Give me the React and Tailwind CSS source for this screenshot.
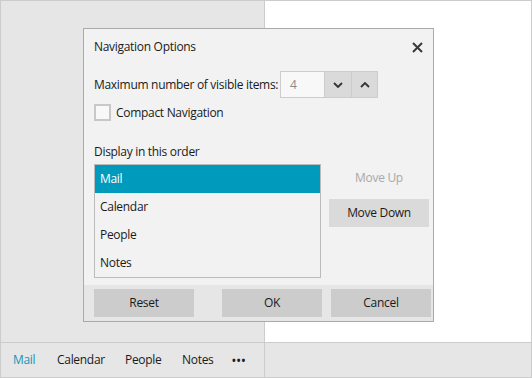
import React from "react";

const font = { fontFamily: '"Open Sans", "Noto Sans", sans-serif' };

function Spinner() {
  return (
    <div className="flex h-[27px]">
      <div className="flex w-[45px] items-center border border-[#cccccc] bg-[#f8f8f8] pl-[9px] text-[#8a8a8a]">4</div>
      <button type="button" className="flex w-[26px] items-center justify-center border-y border-[#cccccc] bg-[#dadada]">
        <svg width="10" height="6" viewBox="0 0 10 6" fill="none" stroke="#333" strokeWidth="1.8">
          <path d="M1 1l4 4 4-4" />
        </svg>
      </button>
      <button type="button" className="flex w-[27px] items-center justify-center border border-[#cccccc] bg-[#dadada]">
        <svg width="10" height="6" viewBox="0 0 10 6" fill="none" stroke="#333" strokeWidth="1.8">
          <path d="M1 5l4-4 4 4" />
        </svg>
      </button>
    </div>
  );
}

function Dialog() {
  const items = ["Mail", "Calendar", "People", "Notes"];
  return (
    <div className="absolute left-[82px] top-[27px] flex h-[294px] w-[351px] flex-col border border-[#aaaaaa] bg-[#f2f2f2] text-[12px] tracking-[-0.3px] text-[#1a1a1a]">
      <div className="flex h-[36px] items-center justify-between pl-[10px] pr-[10px]">
        <span>Navigation Options</span>
        <svg width="11" height="11" viewBox="0 0 11 11" stroke="#3a3a3a" strokeWidth="2">
          <path d="M1 1l9 9M10 1l-9 9" />
        </svg>
      </div>
      <div className="mt-[6px] flex items-center pl-[10px]">
        <span className="w-[186px]">Maximum number of visible items:</span>
        <Spinner />
      </div>
      <div className="mt-[6px] flex h-[17px] items-center pl-[10px]">
        <span className="h-[17px] w-[17px] border-2 border-[#c8c8c8] bg-[#f8f8f8]" />
        <span className="ml-[5px]">Compact Navigation</span>
      </div>
      <div className="mt-[23px] h-[16px] pl-[10px] leading-[16px]">Display in this order</div>
      <div className="mt-[4px] flex pl-[10px]">
        <div className="h-[114px] w-[227px] border border-[#bbbbbb] bg-[#f2f2f2]">
          {items.map((it, i) => (
            <div
              key={it}
              className={`flex h-[28px] items-center pl-[5px] ${i === 0 ? "bg-[#009abd] text-white" : ""}`}
            >
              {it}
            </div>
          ))}
        </div>
        <div className="ml-[8px] flex flex-col gap-[7px]">
          <div className="flex h-[28px] w-[100px] items-center justify-center text-[#a8a8a8]">Move Up</div>
          <div className="flex h-[28px] w-[100px] items-center justify-center bg-[#dadada]">Move Down</div>
        </div>
      </div>
      <div className="mt-auto flex h-[36px] items-center bg-[#e6e6e6] pl-[10px]">
        <div className="flex h-[28px] w-[100px] items-center justify-center bg-[#cccccc]">Reset</div>
        <div className="ml-[28px] flex h-[28px] w-[100px] items-center justify-center bg-[#cccccc]">OK</div>
        <div className="ml-[9px] flex h-[28px] w-[100px] items-center justify-center bg-[#cccccc]">Cancel</div>
      </div>
    </div>
  );
}

export default function App() {
  return (
    <div style={font} className="relative flex h-[378px] w-[532px] flex-col border border-[#cccccc] bg-white">
      <div className="flex flex-1">
        <div className="w-[264px] border-r border-[#cccccc] bg-[#e6e6e6]" />
        <div className="flex-1 bg-white" />
      </div>
      <div className="flex h-[35px] border-t border-[#cccccc] bg-[#e6e6e6] text-[12px] tracking-[-0.3px] text-[#1a1a1a]">
        <div className="flex w-[264px] items-center border-r border-[#cccccc] pl-[12px]">
          <span className="w-[44px] text-[#1b93b3]">Mail</span>
          <span className="w-[68px]">Calendar</span>
          <span className="w-[57px]">People</span>
          <span className="w-[50px]">Notes</span>
          <span className="text-[10px] font-bold tracking-[1px]">•••</span>
        </div>
        <div className="flex-1" />
      </div>
      <Dialog />
    </div>
  );
}
